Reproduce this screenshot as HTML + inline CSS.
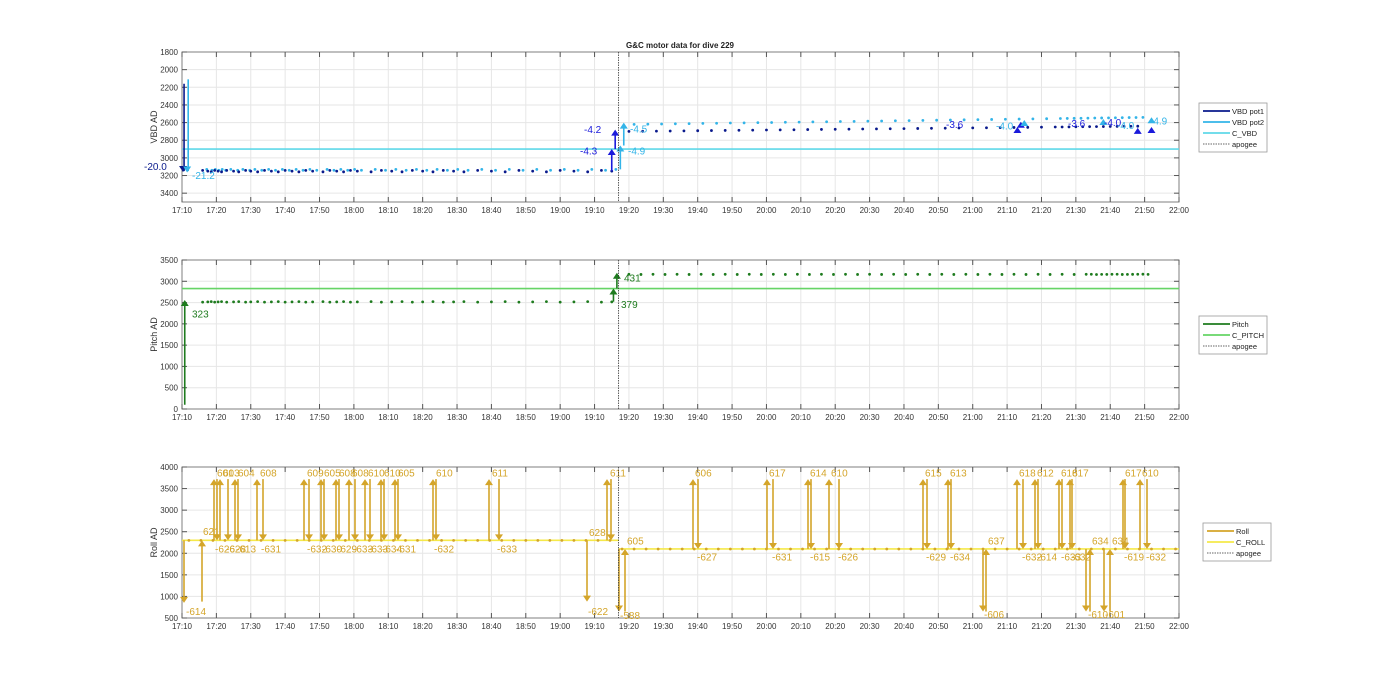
<!DOCTYPE html>
<html><head><meta charset="utf-8">
<style>
html,body{margin:0;padding:0;background:#fff;width:1400px;height:693px;overflow:hidden}
svg{display:block;font-family:"Liberation Sans",Arial,sans-serif}
</style></head>
<body>
<svg id="s" width="1400" height="693" xmlns="http://www.w3.org/2000/svg"></svg>
<script>
var S=document.getElementById('s'),NS='http://www.w3.org/2000/svg',h='';
var X0=182,X1=1179,N=29;
function tx(m){return X0+(X1-X0)*m/290;} // minutes after 17:10
function L(x1,y1,x2,y2,c,w,extra){h+='<line x1="'+x1+'" y1="'+y1+'" x2="'+x2+'" y2="'+y2+'" stroke="'+c+'" stroke-width="'+(w||1)+'" '+(extra||'')+'/>';}
function T(x,y,s,c,sz,anc,extra){h+='<text x="'+x+'" y="'+y+'" fill="'+c+'" font-size="'+(sz||9)+'" text-anchor="'+(anc||'start')+'" '+(extra||'')+'>'+s+'</text>';}
function axes(top,bot,ymin,ymax,step,rev,label){
  var f=function(v){return rev? top+(v-ymin)/(ymax-ymin)*(bot-top) : bot-(v-ymin)/(ymax-ymin)*(bot-top);};
  for(var i=0;i<=N;i++){var x=X0+(X1-X0)*i/N;L(x,top,x,bot,'#e6e6e6',1);}
  for(var v=ymin;v<=ymax;v+=step){var y=f(v);L(X0,y,X1,y,'#e6e6e6',1);}
  h+='<rect x="'+X0+'" y="'+top+'" width="'+(X1-X0)+'" height="'+(bot-top)+'" fill="none" stroke="#7f7f7f" stroke-width="1"/>';
  for(var i=0;i<=N;i++){var x=X0+(X1-X0)*i/N;L(x,bot,x,bot-5,'#555',1);L(x,top,x,top+5,'#555',1);
    var m=10+i*10,hh=17+Math.floor(m/60),mm=m%60;T(x,bot+11,hh+':'+(mm<10?'0':'')+mm,'#333',8,'middle');}
  for(var v=ymin;v<=ymax;v+=step){var y=f(v);L(X0,y,X0+5,y,'#555',1);L(X1,y,X1-5,y,'#555',1);T(X0-4,y+3,v,'#333',8,'end');}
  var cy=(top+bot)/2;T(157,cy,label,'#333',9,'middle','transform="rotate(-90 157 '+cy+')"');
  return f;
}
function dot(x,y,c){h+='<circle cx="'+x+'" cy="'+y+'" r="1.4" fill="'+c+'"/>';}
function arrow(x,y1,y2,c,w){ // from y1 to y2
  var d=y2<y1?1:-1;L(x,y1,x,y2+d*5,c,w||1.6);
  h+='<polygon points="'+(x-4)+','+(y2+d*6)+' '+(x+4)+','+(y2+d*6)+' '+x+','+y2+'" fill="'+c+'"/>';}
function legend(x,y,items){
  var hgt=items.length*11+5;h+='<rect x="'+x+'" y="'+y+'" width="68" height="'+hgt+'" fill="#fff" stroke="#999" stroke-width="0.8"/>';
  items.forEach(function(it,i){var yy=y+8+i*11;
    if(it[2])L(x+4,yy,x+31,yy,it[1],1,'stroke-dasharray="1.5,1"');else L(x+4,yy,x+31,yy,it[1],1.8);
    T(x+33,yy+3,it[0],'#222',7.5);});
}
var AP=tx(127); // apogee
T(680,48,'G&amp;C motor data for dive 229','#222',8,'middle','font-weight="bold"');

// ===== TOP =====
var f1=axes(52,202,1800,3500,200,true,'VBD AD');
L(X0,f1(2900),X1,f1(2900),'#5fd8e8',1.6);
var dk='#0a1a8c',lt='#33b4e8';
var ta=[6,7.5,8.5,9.5,10.5,11.5,13,15,16.5,18.5,20,22,24,26,28,30,32,34,36,38,41,43,45,47,49,51,55,58,61,64,67,70,73,76,79,82,86,90,94,98,102,106,110,114,118,122,125];
ta.forEach(function(m,i){dot(tx(m),f1(3150+((i%3)-1)*8),dk);dot(tx(m+1.2),f1(3130+((i%2))*10),lt);});
for(var m=130;m<=279;m+=(m>250?2:4)){var k=(m-130)/150;dot(tx(m),f1(2700-k*60),dk);dot(tx(m+1.5),f1(2620-k*80),lt);}
L(tx(0.6),f1(2160),tx(0.6),f1(3150),dk,1.6);arrow(tx(0.3),f1(3100),f1(3160),dk);
L(tx(1.8),f1(2110),tx(1.8),f1(3150),lt,1.6);arrow(tx(1.5),f1(3100),f1(3165),lt);
T(144,f1(3140),'-20.0',dk,10);T(192,f1(3240),'-21.2',lt,10);
arrow(tx(125),f1(3150),f1(2900),'#1a1adb');arrow(tx(126),f1(2900),f1(2680),'#1a1adb');
arrow(tx(127.5),f1(3130),f1(2860),lt);arrow(tx(128.5),f1(2860),f1(2600),lt);
T(584,f1(2720),'-4.2','#1a1adb',10);T(580,f1(2960),'-4.3','#1a1adb',10);
T(630,f1(2710),'-4.5',lt,10);T(628,f1(2960),'-4.9',lt,10);
[[243,2650],[244,2590],[278,2660],[282,2650]].forEach(function(p){arrow(tx(p[0]),f1(p[1]+30),f1(p[1]),'#1a1adb');});
[[245,2570],[268,2560],[282,2540]].forEach(function(p){arrow(tx(p[0]),f1(p[1]+30),f1(p[1]),lt);});
T(946,f1(2660),'-3.6','#1a1adb',10);T(996,f1(2680),'-4.0',lt,10);T(1068,f1(2650),'-3.6','#1a1adb',10);
T(1104,f1(2640),'-4.0','#1a1adb',10);T(1117,f1(2670),'-4.0',lt,10);T(1150,f1(2620),'-4.9',lt,10);
L(AP,52,AP,202,'#333',0.8,'stroke-dasharray="1.5,1"');
legend(1199,103,[['VBD pot1',dk],['VBD pot2',lt],['C_VBD','#5fd8e8'],['apogee','#666',1]]);

// ===== MIDDLE =====
var f2=axes(260,409,0,3500,500,false,'Pitch AD');
L(X0,f2(2830),X1,f2(2830),'#66d466',1.6);
var gr='#1e7b1e';
ta.forEach(function(m,i){dot(tx(m),f2(2510+(i%3)*6),gr);});
for(var m=130;m<=282;m+=(m>260?1.5:3.5)){dot(tx(m),f2(3160+(m%7)),gr);}
arrow(tx(0.8),f2(100),f2(2560),gr);T(192,f2(2150),'323',gr,10);
arrow(tx(125.5),f2(2520),f2(2830),gr);arrow(tx(126.5),f2(2830),f2(3200),gr);
T(621,f2(2370),'379',gr,10);T(624,f2(2990),'431',gr,10);
L(AP,260,AP,409,'#333',0.8,'stroke-dasharray="1.5,1"');
legend(1199,316,[['Pitch',gr],['C_PITCH','#66d466'],['apogee','#666',1]]);

// ===== BOTTOM =====
var f3=axes(467,618,500,4000,500,false,'Roll AD');
var yl='#f5e94a',rc='#d4a52a';
L(X0,f3(2300),AP,f3(2300),yl,1.6);L(AP,f3(2100),X1,f3(2100),yl,1.6);
for(var m=2;m<290;m+=3.5){dot(tx(m),f3(m<127?2300:2100),rc);}
function lx(x,v){return x;}
var upL=[[214,'601'],[220,'603'],[235,'604'],[257,'608'],[304,'609'],[321,'605'],[336,'608'],[349,'608'],[365,'610'],[381,'610'],[395,'605'],[433,'610'],[489,'611'],[607,'611']];
var dnL=[[217,'-626'],[228,'-628'],[238,'-613'],[263,'-631'],[309,'-632'],[324,'-630'],[339,'-629'],[355,'-633'],[370,'-633'],[384,'-634'],[398,'-631'],[436,'-632'],[499,'-633'],[611,'']];
upL.forEach(function(a){arrow(a[0],f3(2300),f3(3720),rc);T(a[0]+3,f3(3780),a[1],rc,10);});
dnL.forEach(function(a){arrow(a[0],f3(3720),f3(2300),rc);T(a[0]-2,f3(2020),a[1],rc,10);});
arrow(184,f3(2300),f3(850),rc);T(186,f3(570),'-614',rc,10);
arrow(202,f3(880),f3(2300),rc);T(203,f3(2420),'621',rc,10);
arrow(587,f3(2300),f3(880),rc);T(588,f3(570),'-622',rc,10);T(589,f3(2400),'628',rc,10);
arrow(619,f3(2100),f3(650),rc);arrow(625,f3(650),f3(2100),rc);T(620,f3(480),'-588',rc,10);T(627,f3(2200),'605',rc,10);
var upR=[[693,'606'],[767,'617'],[808,'614'],[829,'610'],[923,'615'],[948,'613'],[1017,'618'],[1035,'612'],[1059,'618'],[1070,'617'],[1123,'617'],[1140,'610']];
var dnR=[[698,'-627'],[773,'-631'],[811,'-615'],[839,'-626'],[927,'-629'],[951,'-634'],[1023,'-632'],[1038,'-614'],[1062,'-633'],[1072,'-632'],[1125,'-619'],[1147,'-632']];
upR.forEach(function(a){arrow(a[0],f3(2100),f3(3720),rc);T(a[0]+2,f3(3780),a[1],rc,10);});
dnR.forEach(function(a){arrow(a[0],f3(3720),f3(2100),rc);T(a[0]-1,f3(1830),a[1],rc,10);});
arrow(983,f3(2100),f3(650),rc);arrow(986,f3(650),f3(2100),rc);T(984,f3(500),'-606',rc,10);T(988,f3(2200),'637',rc,10);
arrow(1086,f3(2100),f3(650),rc);arrow(1090,f3(650),f3(2100),rc);T(1088,f3(500),'-610',rc,10);T(1092,f3(2200),'634',rc,10);
arrow(1104,f3(2100),f3(650),rc);arrow(1110,f3(650),f3(2100),rc);T(1105,f3(500),'-601',rc,10);T(1112,f3(2200),'634',rc,10);
L(AP,467,AP,618,'#333',0.8,'stroke-dasharray="1.5,1"');
legend(1203,523,[['Roll',rc],['C_ROLL',yl],['apogee','#666',1]]);
S.innerHTML=h;
</script>
</body></html>
